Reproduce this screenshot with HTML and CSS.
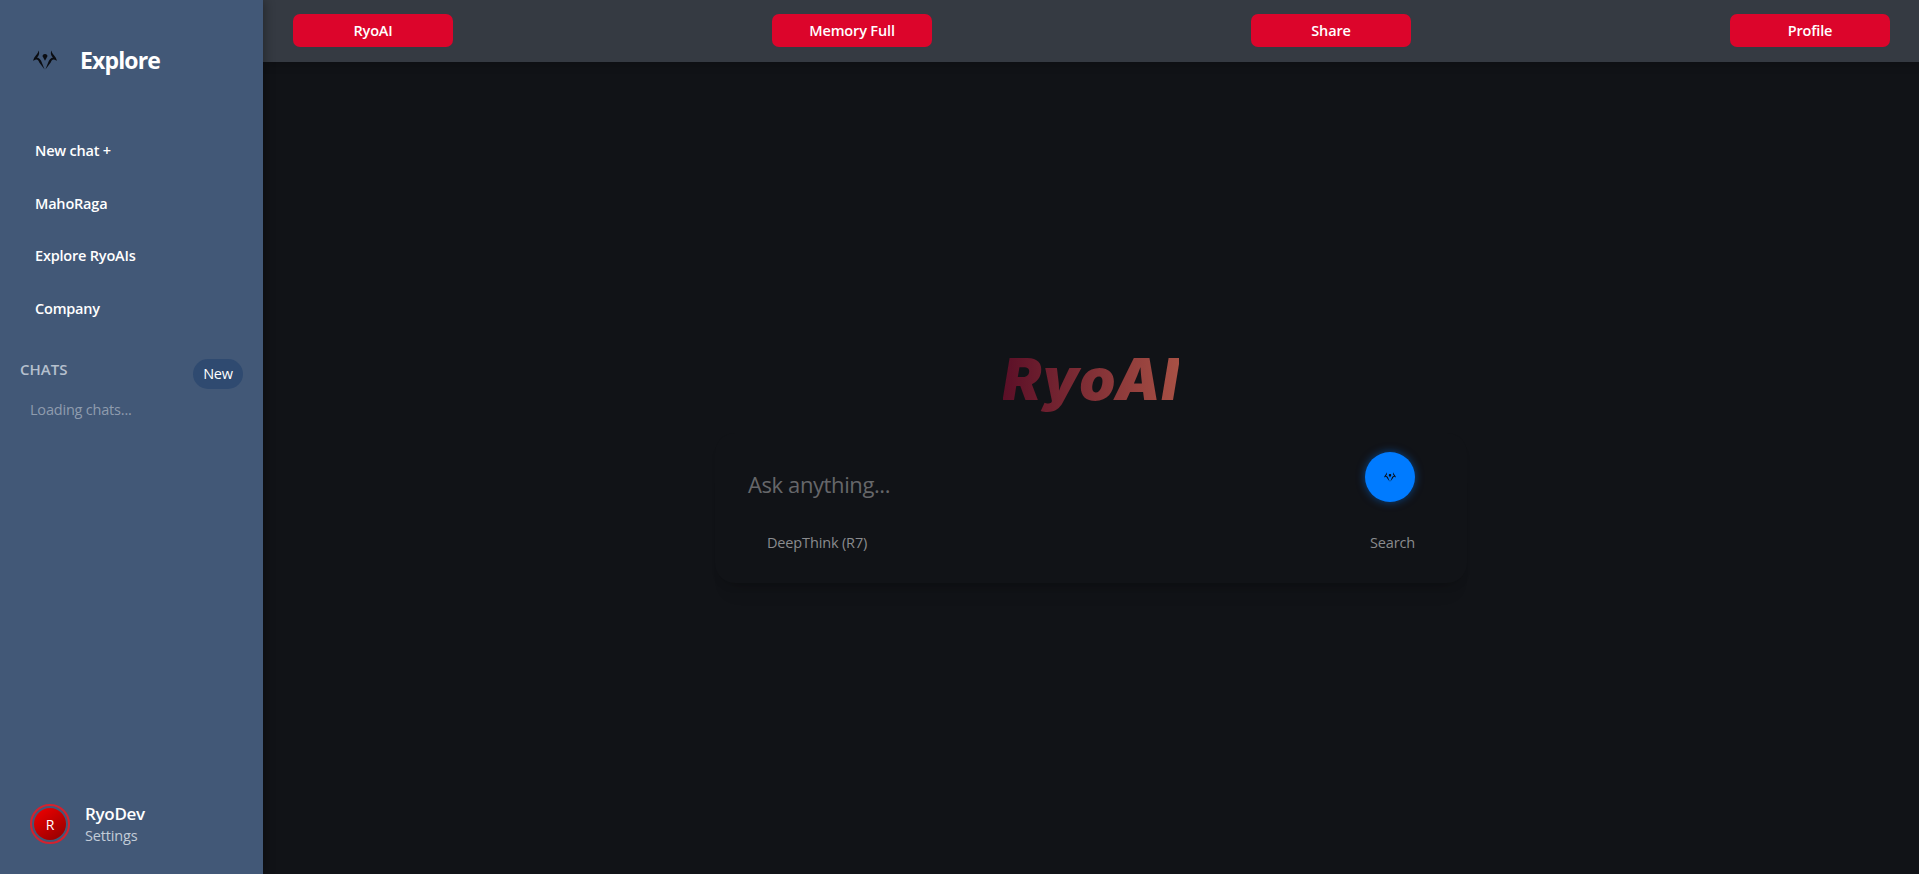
FILE: index.html
```html
<!DOCTYPE html>
<html lang="en">
<head>
  <meta charset="UTF-8">
  <meta name="viewport" content="width=device-width, initial-scale=1.0">
  <title>RyoAI</title>
  <link rel="stylesheet" href="styles.css">
</head>
<body>
  <svg class="icon-defs" width="0" height="0">
    <symbol id="ryo-mark" viewBox="0 0 24 20">
      <path id="ryo-horn" d="M5.5 0.5 C5.6 3 3 5 1.2 7.8 L0 10.8 L3 9.6 C4.5 9.2 5.5 10.5 6.3 12.5 L11.6 19.6 L8.2 11 C7 9 5.2 7.6 3.9 7.5 C5.6 6 7 3.5 5.5 0.5 Z"/>
      <use href="#ryo-horn" transform="matrix(-1 0 0 1 24 0)"/>
      <path d="M12 4 C13.5 4 14.8 5 14.3 6.5 L12 10.8 L9.7 6.5 C9.2 5 10.5 4 12 4 Z"/>
    </symbol>
  </svg>

  <div class="app">
    <aside class="sidebar">
      <div class="brand">
        <svg class="brand-icon"><use href="#ryo-mark"/></svg>
        <span class="brand-name">Explore</span>
      </div>

      <nav class="side-nav">
        <a class="side-link">New chat +</a>
        <a class="side-link">MahoRaga</a>
        <a class="side-link">Explore RyoAIs</a>
        <a class="side-link">Company</a>
      </nav>

      <div class="chats-head">
        <span class="chats-title">CHATS</span>
        <button class="chats-new">New</button>
      </div>
      <div class="chats-loading">Loading chats...</div>

      <div class="user-box">
        <div class="avatar"><span class="avatar-inner">R</span></div>
        <div class="user-text">
          <div class="user-name">RyoDev</div>
          <div class="user-link">Settings</div>
        </div>
      </div>
    </aside>

    <main class="main">
      <header class="topbar">
        <button class="top-btn">RyoAI</button>
        <button class="top-btn">Memory Full</button>
        <button class="top-btn">Share</button>
        <button class="top-btn">Profile</button>
      </header>

      <section class="center">
        <h1 class="logo">RyoAI</h1>
        <div class="ask-card">
          <div class="ask-row">
            <span class="ask-input">Ask anything...</span>
            <button class="send-btn"><svg class="send-icon"><use href="#ryo-mark"/></svg></button>
          </div>
          <div class="ask-options">
            <span class="ask-option">DeepThink (R7)</span>
            <span class="ask-option">Search</span>
          </div>
        </div>
      </section>
    </main>
  </div>
</body>
</html>
```

FILE: styles.css
```css
* {
  box-sizing: border-box;
}
html, body {
  height: 100%;
}
body {
  margin: 0;
  font-family: "Open Sans", "Noto Sans", sans-serif;
  background-color: #111317;
  color: #fff;
  overflow: hidden;
}
.icon-defs {
  display: block;
  height: 0;
}
.app {
  display: flex;
  height: 874px;
}

/* sidebar */
.sidebar {
  position: relative;
  z-index: 2;
  width: 263px;
  flex-shrink: 0;
  display: flex;
  flex-direction: column;
  background-color: #425877;
  box-shadow: 2px 0 10px rgba(0, 0, 0, 0.3);
}
.brand {
  display: flex;
  align-items: center;
  gap: 23px;
  padding: 12px 0 0 33px;
  height: 107px;
}
.brand-icon {
  width: 24px;
  height: 20px;
  fill: #0b0d12;
}
.brand-name {
  font-size: 23px;
  font-weight: 700;
  letter-spacing: -0.85px;
}
.side-nav {
  display: flex;
  flex-direction: column;
  padding: 27px 0 0 35px;
}
.side-link {
  height: 52.7px;
  line-height: 34px;
  font-size: 14.5px;
  font-weight: 600;
  letter-spacing: -0.2px;
}
.chats-head {
  display: flex;
  justify-content: space-between;
  padding: 14px 20px 0;
}
.chats-title {
  font-size: 15px;
  font-weight: 600;
  line-height: 20px;
  color: #b6c0ce;
}
.chats-new {
  width: 50px;
  height: 30px;
  padding: 0;
  border: none;
  border-radius: 15px;
  background-color: #2f4a70;
  color: #fff;
  font-family: inherit;
  font-size: 14.5px;
  letter-spacing: -0.2px;
}
.chats-loading {
  padding: 11px 0 0 30px;
  font-size: 14.5px;
  letter-spacing: -0.2px;
  color: #8f9cae;
}
.user-box {
  margin-top: auto;
  display: flex;
  align-items: center;
  gap: 15px;
  padding: 0 0 28px 30px;
}
.avatar {
  width: 40px;
  height: 40px;
  padding: 2px;
  border: 2px solid #d3222f;
  border-radius: 50%;
}
.avatar-inner {
  display: flex;
  align-items: center;
  justify-content: center;
  width: 100%;
  height: 100%;
  border-radius: 50%;
  background: linear-gradient(145deg, #f40000, #8f0000);
  font-size: 14px;
}
.user-name {
  font-size: 17px;
  font-weight: 600;
  letter-spacing: -0.3px;
  line-height: 23px;
}
.user-link {
  font-size: 14.5px;
  letter-spacing: -0.15px;
  line-height: 21px;
  color: #c3ccd8;
}

/* main area */
.main {
  flex: 1;
  display: flex;
  flex-direction: column;
  min-width: 0;
}
.topbar {
  position: relative;
  z-index: 1;
  height: 62px;
  flex-shrink: 0;
  display: flex;
  align-items: center;
  justify-content: space-between;
  padding: 0 29px 1px 30px;
  background-color: #353a42;
  box-shadow: 0 2px 10px rgba(0, 0, 0, 0.2);
}
.top-btn {
  width: 160px;
  height: 33px;
  border: none;
  border-radius: 7px;
  background-color: #dc052b;
  color: #fff;
  font-family: inherit;
  font-size: 14.5px;
  font-weight: 600;
  letter-spacing: -0.15px;
}
.center {
  flex: 1;
  display: flex;
  flex-direction: column;
  align-items: center;
  padding-top: 281px;
}
.logo {
  margin: 0;
  height: 72px;
  font-family: Inter, "Open Sans", sans-serif;
  font-size: 58px;
  line-height: 72px;
  font-weight: 900;
  font-style: italic;
  letter-spacing: 1px;
  background: linear-gradient(90deg, #5b0f27, #a85145);
  -webkit-background-clip: text;
  background-clip: text;
  color: transparent;
}
.ask-card {
  width: 752px;
  height: 150px;
  margin-top: 18px;
  padding: 19px 52px 0 33px;
  border-radius: 20px;
  background-color: #111317;
  box-shadow: 0 7px 10px -6px rgba(0, 0, 0, 0.22), 0 22px 16px -12px rgba(0, 0, 0, 0.08);
}
.ask-row {
  display: flex;
  justify-content: space-between;
  height: 76px;
}
.ask-input {
  margin-top: 17px;
  font-size: 22px;
  letter-spacing: -0.4px;
  line-height: 30px;
  color: #66676a;
}
.send-btn {
  width: 50px;
  height: 50px;
  padding: 0;
  display: flex;
  align-items: center;
  justify-content: center;
  border: none;
  border-radius: 50%;
  background-color: #007bff;
  box-shadow: 0 0 8px rgba(0, 123, 255, 0.5);
}
.send-icon {
  width: 12px;
  height: 10px;
  fill: #0b0d12;
}
.ask-options {
  display: flex;
  justify-content: space-between;
  padding: 0 0 0 19px;
  margin-top: 5px;
}
.ask-option {
  font-size: 14.5px;
  letter-spacing: -0.15px;
  line-height: 20px;
  color: #8a8b8e;
}
```
